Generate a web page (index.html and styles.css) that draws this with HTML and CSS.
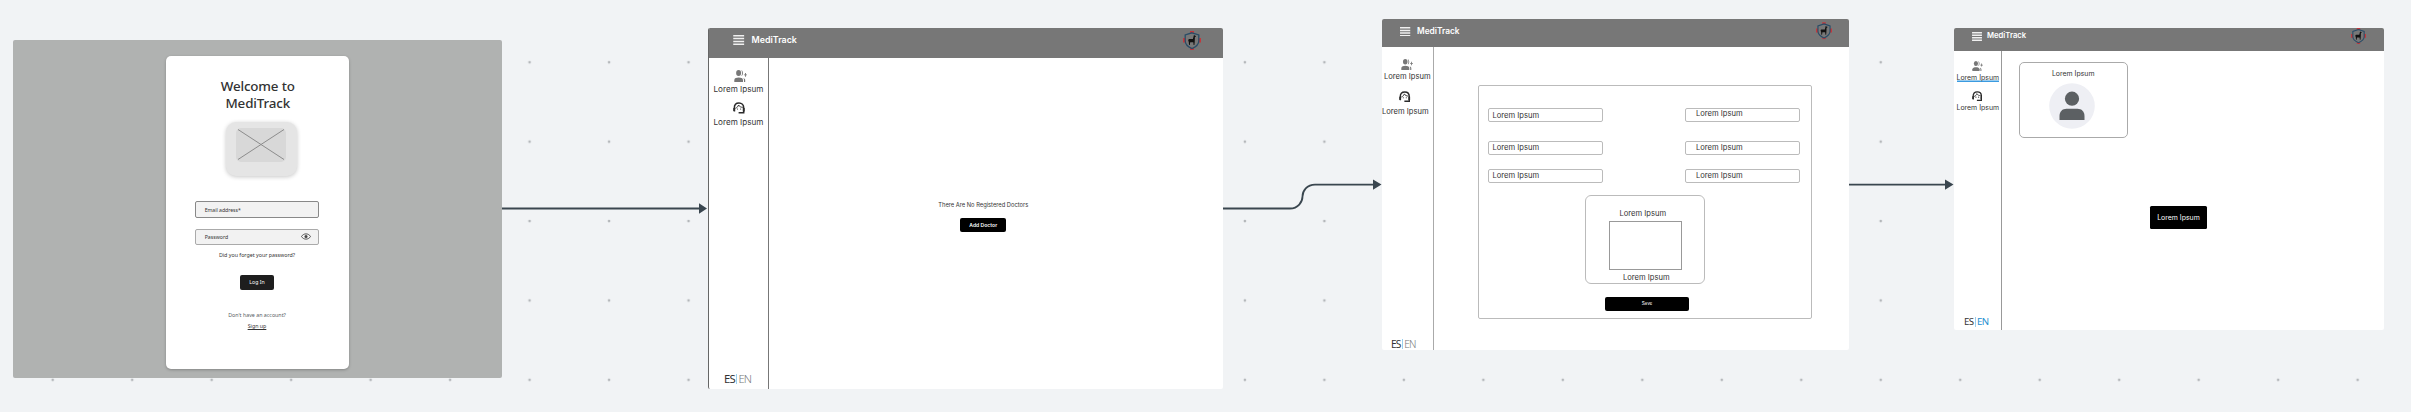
FILE: index.html
```html
<!DOCTYPE html>
<html lang="en">
<head>
<meta charset="utf-8">
<title>MediTrack flow</title>
<link rel="stylesheet" href="styles.css">
</head>
<body>
<svg class="defs" width="0" height="0" aria-hidden="true">
  <defs>
    <pattern id="dots" x="13" y="22.5" width="79.48" height="79.4" patternUnits="userSpaceOnUse"><circle cx="39.7" cy="39.8" r="1.35" fill="#b4b7ba"/></pattern>
    <symbol id="menu" viewBox="0 0 11 10"><path d="M0 .8h11M0 3.6h11M0 6.4h11M0 9.2h11" stroke="#f0f0f0" stroke-width="1.5"/></symbol>
    <symbol id="users" viewBox="0 0 13 12"><g fill="#777"><ellipse cx="4.6" cy="3.1" rx="2.5" ry="3"/><path d="M.3 12V9.9C.3 8.100 2.600 7.400 4.700 7.400S9 8.100 9 9.900V12z"/><path d="M7.300.200C9.500.500 9.500 5.700 7.300 6 8.300 4.500 8.300 1.700 7.300.200zM9.300 8c1.500.500 1.900 1.300 1.900 2.200V12H10V10c0-.8-.2-1.400-.7-2zM11 3h.9v1.400H13v.9h-1.100v1.400H11V5.300H9.900v-.9H11z"/></g></symbol>
    <symbol id="support" viewBox="0 0 12 12"><path d="M1.300 9V6.200C1.300 3 3.300 1.100 6 1.100s4.700 1.900 4.700 4.700v4.900H5.600" fill="none" stroke="#2b2b2b" stroke-width="1.500"/><path d="M.3 6h1.900v3.600H.9L.3 9zM9.800 6h1.900v3.500H9.800z" fill="#2b2b2b"/><path d="M2.400 6.300C4.300 5.500 5.200 4.400 5.500 3c1 1.700 2.500 2.300 4.300 2.300" fill="none" stroke="#333" stroke-width="1"/><circle cx="4.500" cy="7" r=".6" fill="#2b2b2b"/><circle cx="7.600" cy="7" r=".6" fill="#2b2b2b"/></symbol>
    <symbol id="crest" viewBox="0 0 18 19"><path d="M7 0h4v3H7zM7 16h4v3H7zM0 7h3v4.500H0zM15 7h3v4.500h-3z" fill="#c2383c"/><path d="M9 1.800 15.800 4v6c0 3.500-3.300 6-6.800 7.600C5.500 16 2.200 13.500 2.200 10V4z" fill="#777" stroke="#294c67" stroke-width="1.300"/><path d="M11 3.800l.6.800 1.300.5-.3.900h-.7L11.700 11l-.3 3h-.8l-.3-2.700H7.200L6.800 14H6l-.2-3-.5-1.300C5 8.500 5.700 8 6.800 8h3.100z" fill="#111"/></symbol>
  </defs>
</svg>
<main class="canvas">
  <svg class="canvas-layer" width="2411" height="412">
    <rect y="40" width="2411" height="372" fill="url(#dots)"/>
    <g fill="none" stroke="#3a464f" stroke-width="1.800">
      <path d="M502 208.500H700"/>
      <path d="M1222 208.500H1290C1298 208.500 1302.500 202 1302.500 196.500S1307 184.600 1315 184.600H1374"/>
      <path d="M1849 184.600H1946"/>
    </g>
    <path d="M699 203.300 707 208.500 699 213.700zM1373 179.500 1381.500 184.600 1373 189.800zM1945 179.500 1953.500 184.600 1945 189.800z" fill="#3a464f"/>
  </svg>

  <section class="frame login">
    <div class="login-card">
      <h1>Welcome to<br>MediTrack</h1>
      <div class="mail-tile"><svg width="50" height="34" viewBox="0 0 50 34"><rect width="50" height="34" rx="5" fill="#d8d8d8"/><path d="M2 1.500 48 31.500M48 1.500 2 31.500" stroke="#8c8c8c" stroke-width="1"/></svg></div>
      <div class="input email"><span>Email address*</span></div>
      <div class="input password"><span>Password</span><svg width="10" height="7" viewBox="0 0 10 7"><path d="M.5 3.500C2.500 0 7.500 0 9.500 3.500 7.500 7 2.500 7 .5 3.500z" fill="none" stroke="#444" stroke-width=".9"/><circle cx="5" cy="3.500" r="1.500" fill="#444"/></svg></div>
      <p class="forgot">Did you forget your password?</p>
      <button class="login-btn">Log In</button>
      <p class="no-account">Don't have an account?</p>
      <p class="signup">Sign up</p>
    </div>
  </section>

  <section class="frame app empty">
    <header><svg class="menu"><use href="#menu"/></svg><b>MediTrack</b><svg class="crest"><use href="#crest"/></svg></header>
    <div class="body">
      <nav><svg class="users"><use href="#users"/></svg><span>Lorem Ipsum</span><svg class="support"><use href="#support"/></svg><span class="second">Lorem Ipsum</span><div class="lang">ES<i></i><em>EN</em></div></nav>
      <div class="content"><p class="notice">There Are No Registered Doctors</p><button class="add">Add Doctor</button></div>
    </div>
  </section>

  <section class="frame app register">
    <header><svg class="menu"><use href="#menu"/></svg><b>MediTrack</b><svg class="crest"><use href="#crest"/></svg></header>
    <div class="body">
      <nav><svg class="users"><use href="#users"/></svg><span>Lorem Ipsum</span><svg class="support"><use href="#support"/></svg><span class="second">Lorem Ipsum</span><div class="lang">ES<i></i><em>EN</em></div></nav>
      <div class="content">
        <form class="form">
          <div class="fields">
            <div class="field low">Lorem Ipsum</div><div class="field right high">Lorem Ipsum</div>
            <div class="field">Lorem Ipsum</div><div class="field right">Lorem Ipsum</div>
            <div class="field">Lorem Ipsum</div><div class="field right">Lorem Ipsum</div>
          </div>
          <div class="upload"><span class="above">Lorem Ipsum</span><div class="preview"></div><span class="below">Lorem Ipsum</span></div>
          <button class="save" type="button">Save</button>
        </form>
      </div>
    </div>
  </section>

  <section class="frame app doctors">
    <header><svg class="menu"><use href="#menu"/></svg><b>MediTrack</b><svg class="crest"><use href="#crest"/></svg></header>
    <div class="body">
      <nav><svg class="users"><use href="#users"/></svg><span class="active">Lorem Ipsum</span><svg class="support"><use href="#support"/></svg><span class="second">Lorem Ipsum</span><div class="lang">ES<i></i><em>EN</em></div></nav>
      <div class="content">
        <article class="doctor"><span>Lorem Ipsum</span><svg width="46" height="46" viewBox="0 0 46 46"><circle cx="23" cy="23" r="22.800" fill="#eeeff4"/><circle cx="23" cy="15.700" r="7.100" fill="#5c6063"/><path d="M10.500 37V33c0-4.500 3-7.300 7-7.300h11c4 0 7 2.800 7 7.300v4z" fill="#5c6063"/></svg></article>
        <button class="more">Lorem Ipsum</button>
      </div>
    </div>
  </section>
</main>
</body>
</html>
```
FILE: styles.css
```css
* { box-sizing: border-box; margin: 0; padding: 0; }
body { background: #f1f3f5; font-family: Inter, "Liberation Sans", sans-serif; overflow: hidden; }
svg { display: block; flex: none; }
button { border: 0; font-family: inherit; display: block; white-space: nowrap; }
.defs { position: absolute; }
.canvas { position: relative; width: 2411px; height: 412px; overflow: hidden; }
.canvas-layer { position: absolute; left: 0; top: 0; }
.frame { position: absolute; border-radius: 2px; overflow: hidden; white-space: nowrap; }

/* login */
.login { left: 13.300px; top: 39.5px; width: 488.700px; height: 338px; background: #b0b2b1; padding: 16.5px 0 0 153.200px; font-family: "Noto Sans", sans-serif; }
.login-card { width: 182.500px; height: 312.500px; background: #fff; border-radius: 5px; box-shadow: 0 1px 3px rgba(0,0,0,.25); display: flex; flex-direction: column; align-items: center; padding: 22px 1.500px 0 0; color: #333; }
.login h1 { font-size: 13.400px; line-height: 17px; font-weight: 500; text-align: center; color: #333; letter-spacing: -.15px; margin-left: 1.500px; }
.mail-tile { width: 71px; height: 54px; margin: 10px 0 0 8.500px; border-radius: 10px; background: #e5e5e5; box-shadow: 0 1px 4px rgba(0,0,0,.22); padding: 5.500px 0 0 10.500px; }
.input { width: 123.500px; border: 1px solid #999; border-radius: 2px; background: #f2f2f2; display: flex; align-items: center; justify-content: space-between; padding: 0 7px 0 8.500px; font-size: 5.200px; line-height: 8px; }
.email { height: 17px; margin-top: 25px; border-color: #888; letter-spacing: -.05px; }
.password { height: 16px; margin-top: 10.500px; border-color: #aaa; }
.forgot { font-size: 5.300px; line-height: 8px; margin-top: 6.500px; }
.login-btn { width: 33.500px; height: 15px; margin-top: 16px; border-radius: 2px; background: #1e1e1e; color: #fff; font-size: 5.200px; line-height: 15px; }
.no-account { font-size: 5.300px; line-height: 8px; margin-top: 21px; color: #555d63; }
.signup { font-size: 5.300px; line-height: 8px; margin-top: 3px; text-decoration: underline; text-decoration-thickness: .5px; }

/* app frames */
.app { background: #fff; display: flex; flex-direction: column; }
.app header { flex: none; display: flex; align-items: flex-start; background: #777; color: #fff; }
.app header b { font-weight: 600; line-height: 10px; }
.crest { margin-left: auto; }
.body { flex: 1; display: flex; min-height: 0; }
nav { flex: none; display: flex; flex-direction: column; align-items: flex-start; color: #333; }
nav span { line-height: 10px; }
.lang { margin-top: auto; display: flex; font-family: "Noto Sans", sans-serif; color: #333; line-height: 12px; }
.lang i { width: 1px; margin: 1px 1px 1px 1.500px; background: #9bd0ee; }
.lang em { font-style: normal; font-weight: 300; color: #777; }

.empty { left: 708px; top: 28px; width: 514.500px; height: 361px; border-left: 1px solid #666; }
.empty header { height: 30px; padding: 0 22px 0 24px; }
.empty .menu { width: 11.500px; height: 10px; margin-top: 7px; }
.empty b { font-size: 8.900px; margin: 7px 0 0 7px; }
.empty .crest { width: 18px; height: 19px; margin-top: 3px; }
.empty nav { width: 60px; border-right: 1px solid #777; padding: 12px 0 4px 4.500px; font-size: 8.150px; }
.empty .users { width: 13px; height: 12px; margin-left: 20.500px; }
.empty nav span { margin-top: 1.500px; }
.empty .support { width: 12px; height: 12px; margin: 8px 0 0 19.500px; }
.empty nav .second { margin-top: 3.500px; }
.empty .lang { margin-left: 10.500px; font-size: 11.300px; letter-spacing: -.8px; }
.empty .content { flex: 1; display: flex; flex-direction: column; align-items: center; padding: 142.500px 25px 0 0; }
.notice { font-size: 5.750px; line-height: 8px; color: #333; }
.add { width: 46px; height: 14px; margin-top: 9px; border-radius: 2px; background: #000; color: #fff; font-size: 5.100px; font-weight: 600; line-height: 14px; }

.register { left: 1381.500px; top: 19px; width: 467.500px; height: 331px; }
.register header { height: 28px; padding: 0 17px 0 18.500px; }
.register .menu { width: 10.500px; height: 9.500px; margin-top: 7.500px; }
.register b { font-size: 8.300px; margin: 7px 0 0 6.500px; }
.register .crest { width: 16px; height: 17.500px; margin-top: 3px; }
.register nav { width: 52px; border-right: 1.500px solid #aaa; padding: 12px 0 0 .500px; font-size: 7.600px; }
.register .users { width: 12px; height: 11px; margin-left: 18.500px; }
.register nav span { margin: 2px 0 0 2px; }
.register .support { width: 11.500px; height: 11.500px; margin: 8.500px 0 0 17px; }
.register nav .second { margin: 4.500px 0 0; }
.register .lang { margin-left: 9px; font-size: 10.200px; letter-spacing: -.8px; }
.register .content { padding: 38px 0 0 44px; }
.form { width: 334.500px; height: 233.500px; border: 1px solid #bbb; border-radius: 2px; display: flex; flex-direction: column; font-size: 7.600px; color: #333; }
.fields { display: grid; grid-template-columns: 114.500px 114.500px; justify-content: space-between; grid-template-rows: 32.300px 28.700px 14px; padding: 22.300px 11.500px 0 9.500px; height: 98px; }
.field { height: 14px; border: 1px solid #bbb; border-radius: 2px; padding-left: 3.500px; line-height: 12px; }
.field.low { line-height: 13.500px; }
.field.right { padding-left: 10px; }
.field.high { line-height: 10px; }
.upload { width: 119.500px; height: 89px; margin: 11px 0 0 106.500px; border: 1px solid #bbb; border-radius: 6px; display: flex; flex-direction: column; }
.upload span { line-height: 10px; }
.above { margin: 12.500px 0 0 33.500px; }
.preview { width: 73px; height: 50px; margin: 2px 0 0 23px; border: 1px solid #999; }
.below { margin: 3px 0 0 37px; }
.save { width: 84px; height: 14px; margin: 13px 0 0 126.500px; border-radius: 2px; background: #000; color: #fff; font-size: 4.600px; line-height: 14px; }

.doctors { left: 1954px; top: 28px; width: 430px; height: 302px; }
.doctors header { height: 23px; padding: 0 18px 0 17.500px; }
.doctors .menu { width: 10px; height: 9px; margin-top: 3.500px; }
.doctors b { font-size: 7.650px; margin: 3px 0 0 5.500px; }
.doctors .crest { width: 15px; height: 16px; margin-top: 0; }
.doctors nav { width: 48px; border-right: 1px solid #999; padding: 10px 0 2px 2.500px; font-size: 6.950px; }
.doctors .users { width: 11px; height: 10px; margin-left: 15.500px; }
.doctors nav span { margin-top: 2px; }
.doctors nav .active { box-shadow: inset 0 -1.500px #3b9be0; height: 9px; margin-bottom: 1px; }
.doctors .support { width: 10.500px; height: 10.500px; margin: 7.500px 0 0 15px; }
.doctors nav .second { margin-top: 2px; }
.doctors .lang { margin-left: 7.500px; font-size: 9.700px; letter-spacing: -.6px; }
.doctors .lang em { color: #1d8fd0; font-weight: 400; }
.doctors .content { padding: 10.500px 0 0 16.500px; }
.doctor { width: 109.500px; height: 76px; border: 1px solid #aaa; border-radius: 5px; display: flex; flex-direction: column; align-items: center; padding-top: 6px; font-size: 6.950px; line-height: 10px; color: #333; }
.doctor svg { margin: 4px 0 0 -2px; }
.more { width: 57px; height: 23px; margin: 68px 0 0 131.500px; border-radius: 1.500px; background: #000; color: #fff; font-size: 6.950px; line-height: 23px; }
```
